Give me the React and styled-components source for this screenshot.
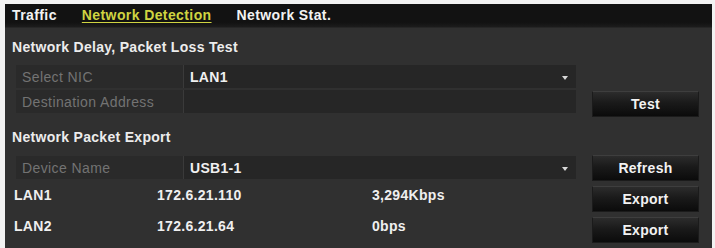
import React from 'react'
import styled, { createGlobalStyle } from 'styled-components'

const GlobalStyle = createGlobalStyle`
  html, body {
    margin: 0;
    padding: 0;
    background: #f2f2f2;
  }
  body {
    font-family: 'Liberation Sans', Arial, sans-serif;
  }
`

const Panel = styled.div`
  margin: 4px 3px 0 5px;
  height: 244px;
  background: #303030;
  display: flex;
  flex-direction: column;
  overflow: hidden;
`

const TabBar = styled.div`
  height: 24px;
  display: flex;
  align-items: center;
  gap: 25px;
  padding-left: 7px;
  background: linear-gradient(#121212 0%, #121212 80%, #1c1c1c 100%);
  border-bottom: 1px solid #262626;
`

const Tab = styled.div`
  font-size: 14px;
  font-weight: bold;
  letter-spacing: 0.4px;
  color: ${(p) => (p.active ? '#cfd441' : '#f2f2f2')};
  text-decoration: ${(p) => (p.active ? 'underline' : 'none')};
  text-underline-offset: 2px;
  padding-bottom: 2px;
`

const Body = styled.div`
  padding: 0 0 0 7px;
  display: flex;
  flex-direction: column;
`

const SectionTitle = styled.div`
  height: ${(p) => p.h}px;
  display: flex;
  align-items: center;
  font-size: 14px;
  font-weight: bold;
  letter-spacing: 0.3px;
  color: #ececec;
`

const Row = styled.div`
  display: flex;
  align-items: flex-start;
  height: ${(p) => p.h}px;
`

const Field = styled.div`
  margin-left: 4px;
  width: 560px;
  height: 23px;
  display: flex;
  background: #3a3a3a;
  gap: 1px;
`

const Label = styled.div`
  width: 167px;
  background: #2a2a2a;
  color: #737373;
  font-size: 14px;
  letter-spacing: 0.4px;
  display: flex;
  align-items: center;
  padding-left: 6px;
  box-sizing: border-box;
`

const Value = styled.div`
  flex: 1;
  background: #262626;
  color: #f0f0f0;
  font-size: 14px;
  font-weight: bold;
  letter-spacing: 0.3px;
  display: flex;
  align-items: center;
  justify-content: space-between;
  padding: 0 8px 0 6px;
`

const Arrow = styled.span`
  width: 0;
  height: 0;
  border-left: 3px solid transparent;
  border-right: 3px solid transparent;
  border-top: 4px solid #d8d8d8;
  margin-top: 2px;
`

const Button = styled.button`
  margin-left: ${(p) => p.ml ?? 16}px;
  margin-top: ${(p) => p.mt ?? 0}px;
  width: 107px;
  height: 26px;
  border: 1px solid #1b1b1b;
  border-top-color: #3e3e3e;
  background: linear-gradient(#2c2c2c 0%, #1a1a1a 45%, #0b0b0b 100%);
  color: #f2f2f2;
  font-family: 'Liberation Sans', Arial, sans-serif;
  font-size: 14px;
  font-weight: bold;
  letter-spacing: 0.3px;
  padding: 0;
  cursor: pointer;
`

const Cell = styled.div`
  width: ${(p) => p.w}px;
  box-sizing: border-box;
  padding-left: ${(p) => p.pl ?? 0}px;
  color: #efefef;
  font-size: 14px;
  font-weight: bold;
  letter-spacing: 0.3px;
  margin-top: 1px;
  flex-shrink: 0;
`

const lanRows = [
  { name: 'LAN1', ip: '172.6.21.110', rate: '3,294Kbps' },
  { name: 'LAN2', ip: '172.6.21.64', rate: '0bps' },
]

const App = () => {
  return (
    <>
      <GlobalStyle />
      <Panel>
        <TabBar>
          <Tab>Traffic</Tab>
          <Tab active>Network Detection</Tab>
          <Tab>Network Stat.</Tab>
        </TabBar>
        <Body>
          <SectionTitle h={37}>Network Delay, Packet Loss Test</SectionTitle>
          <Row h={25}>
            <Field>
              <Label>Select NIC</Label>
              <Value>
                LAN1
                <Arrow />
              </Value>
            </Field>
          </Row>
          <Row h={27}>
            <Field>
              <Label>Destination Address</Label>
              <Value />
            </Field>
            <Button mt={1}>Test</Button>
          </Row>
          <SectionTitle h={39}>Network Packet Export</SectionTitle>
          <Row h={30}>
            <Field>
              <Label>Device Name</Label>
              <Value>
                USB1-1
                <Arrow />
              </Value>
            </Field>
            <Button mt={-1}>Refresh</Button>
          </Row>
          {lanRows.map((r) => (
            <Row h={31} key={r.name}>
              <Cell w={145} pl={2}>{r.name}</Cell>
              <Cell w={215}>{r.ip}</Cell>
              <Cell w={220}>{r.rate}</Cell>
              <Button ml={0}>Export</Button>
            </Row>
          ))}
        </Body>
      </Panel>
    </>
  )
}

export default App
